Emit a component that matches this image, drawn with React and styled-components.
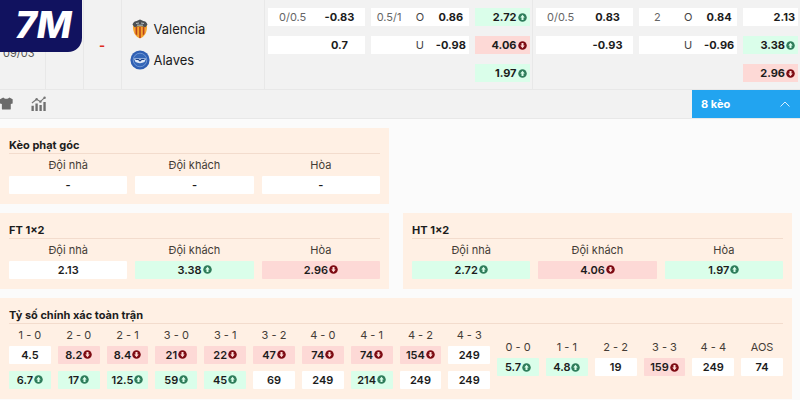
import React from "react";
import styled, { createGlobalStyle } from "styled-components";

const fullTime = {
  handicap: [
    { line: "0/0.5", price: "-0.83" },
    { line: "", price: "0.7" },
  ],
  total: [
    { line: "0.5/1", side: "O", price: "0.86" },
    { line: "", side: "U", price: "-0.98" },
  ],
  result: [
    { price: "2.72", trend: "up" },
    { price: "4.06", trend: "down" },
    { price: "1.97", trend: "up" },
  ],
};

const halfTime = {
  handicap: [
    { line: "0/0.5", price: "0.83" },
    { line: "", price: "-0.93" },
  ],
  total: [
    { line: "2", side: "O", price: "0.84" },
    { line: "", side: "U", price: "-0.96" },
  ],
  result: [
    { price: "2.13" },
    { price: "3.38", trend: "up" },
    { price: "2.96", trend: "down" },
  ],
};

const cornerOdds = [
  { label: "Đội nhà", prices: [{ price: "-" }] },
  { label: "Đội khách", prices: [{ price: "-" }] },
  { label: "Hòa", prices: [{ price: "-" }] },
];

const ftOdds = [
  { label: "Đội nhà", prices: [{ price: "2.13" }] },
  { label: "Đội khách", prices: [{ price: "3.38", trend: "up" }] },
  { label: "Hòa", prices: [{ price: "2.96", trend: "down" }] },
];

const htOdds = [
  { label: "Đội nhà", prices: [{ price: "2.72", trend: "up" }] },
  { label: "Đội khách", prices: [{ price: "4.06", trend: "down" }] },
  { label: "Hòa", prices: [{ price: "1.97", trend: "up" }] },
];

const scoreOdds = [
  { label: "1 - 0", prices: [{ price: "4.5" }, { price: "6.7", trend: "up" }] },
  { label: "2 - 0", prices: [{ price: "8.2", trend: "down" }, { price: "17", trend: "up" }] },
  { label: "2 - 1", prices: [{ price: "8.4", trend: "down" }, { price: "12.5", trend: "up" }] },
  { label: "3 - 0", prices: [{ price: "21", trend: "down" }, { price: "59", trend: "up" }] },
  { label: "3 - 1", prices: [{ price: "22", trend: "down" }, { price: "45", trend: "up" }] },
  { label: "3 - 2", prices: [{ price: "47", trend: "down" }, { price: "69" }] },
  { label: "4 - 0", prices: [{ price: "74", trend: "down" }, { price: "249" }] },
  { label: "4 - 1", prices: [{ price: "74", trend: "down" }, { price: "214", trend: "up" }] },
  { label: "4 - 2", prices: [{ price: "154", trend: "down" }, { price: "249" }] },
  { label: "4 - 3", prices: [{ price: "249" }, { price: "249" }] },
];

const drawOdds = [
  { label: "0 - 0", prices: [{ price: "5.7", trend: "up" }] },
  { label: "1 - 1", prices: [{ price: "4.8", trend: "up" }] },
  { label: "2 - 2", prices: [{ price: "19" }] },
  { label: "3 - 3", prices: [{ price: "159", trend: "down" }] },
  { label: "4 - 4", prices: [{ price: "249" }] },
  { label: "AOS", prices: [{ price: "74" }] },
];

// Icons

const TrendIcon = ({ trend }) => (
  <TrendSvg viewBox="0 0 18 18" $trend={trend} aria-hidden="true">
    <circle cx="9" cy="9" r="8.5" />
    <path
      d={trend === "up" ? "M9 3.5 13.5 9H11V14H7V9H4.5Z" : "M9 14.5 4.5 9H7V4H11V9H13.5Z"}
      fill={trend === "up" ? "#dafeea" : "#fdd9d6"}
    />
  </TrendSvg>
);

const ValenciaCrest = () => (
  <Crest viewBox="0 0 20 20" aria-hidden="true">
    <path d="M3.4 5.4C6 4.2 14 4.2 16.6 5.4L17 8C17 14 14 18 10 19.5C6 18 3 14 3 8Z" fill="#f5a52e" />
    <path d="M5.6 8h1.6v8.600L5.600 15zM9.200 8h1.600v11H9.200zM12.800 8h1.600v7l-1.600 1.600z" fill="#b8431d" />
    <path d="M2.5 5.5C4 1.5 7 2.6 10 0.6C13 2.6 16 1.5 17.5 5.5L15.5 8.2C12 7 8 7 4.5 8.2Z" fill="#4b5054" />
    <path d="M6 4.5 9 4M11 4 14 4.5M7 6.2h6" stroke="#b9c0c2" strokeWidth="1" />
  </Crest>
);

const AlavesCrest = () => (
  <Crest viewBox="0 0 20 20" aria-hidden="true">
    <circle cx="10" cy="10" r="9.6" fill="#2f5fb3" />
    <circle cx="10" cy="10" r="6.8" fill="#3567b8" stroke="#7fa3dc" strokeWidth="0.8" />
    <path d="M4 8.5h12l-1.500 3.500c-2.500 1.500-6.500 1.500-9 0z" fill="#dfe9f8" />
    <path d="M5.500 9.500h3l1.500 1.500 1.500-1.500h3" fill="none" stroke="#1b3f86" strokeWidth="1.200" />
  </Crest>
);

const ShirtIcon = () => (
  <ToolSvg viewBox="0 0 16 16" aria-hidden="true">
    <path
      d="M3.500 1.500C5 3.500 8.500 3.500 10 1.500L13.500 3.500V8L11.500 8.500V13.500Q11.500 14.500 10.500 14.500H3Q2 14.500 2 13.500V8.500L0 8V3.500Z"
      fill="#6b6b6b"
    />
  </ToolSvg>
);

const StatsIcon = () => (
  <ToolSvg viewBox="0 0 16 16" aria-hidden="true">
    <path d="M0.500 10.500h2.500V16H0.500zM4.700 8h2.500v8H4.700zM9 9.500h2.500V16H9zM13.200 6.500h2.500V16H13.200z" fill="#6f6f6f" />
    <path d="M1 7.500 6 3.500 10 6 14.500 1.800" fill="none" stroke="#777" strokeWidth="1.200" />
    <circle cx="6" cy="3.500" r="1.300" fill="#777" />
    <circle cx="10" cy="6" r="1.300" fill="#777" />
    <circle cx="14.500" cy="1.800" r="1.300" fill="#777" />
  </ToolSvg>
);

// Odds

const Price = ({ price, trend }) => (
  <PriceBox type="button" $trend={trend}>
    {price}
    {trend && <TrendIcon trend={trend} />}
  </PriceBox>
);

const OddsColumns = ({ items }) =>
  items.map((item) => (
    <OddsColumn key={item.label}>
      <OddsLabel>{item.label}</OddsLabel>
      <PriceStack>
        {item.prices.map((p, i) => (
          <Price key={i} {...p} />
        ))}
      </PriceStack>
    </OddsColumn>
  ));

const MainOdds = ({ odds }) => (
  <MainGrid>
    <MainColumn>
      {odds.handicap.map((o) => (
        <HandicapBox key={o.price} type="button">
          <Line>{o.line}</Line>
          <strong>{o.price}</strong>
        </HandicapBox>
      ))}
    </MainColumn>
    <MainColumn>
      {odds.total.map((o) => (
        <TotalBox key={o.price} type="button">
          <Line>{o.line}</Line>
          <Side>{o.side}</Side>
          <strong>{o.price}</strong>
        </TotalBox>
      ))}
    </MainColumn>
    <MainColumn>
      {odds.result.map((o) => (
        <ResultBox key={o.price} type="button" $trend={o.trend}>
          {o.price}
          {o.trend && <TrendIcon trend={o.trend} />}
        </ResultBox>
      ))}
    </MainColumn>
  </MainGrid>
);

const Panel = ({ title, items }) => (
  <PanelBox>
    <PanelTitle>{title}</PanelTitle>
    <ThreeGrid>
      <OddsColumns items={items} />
    </ThreeGrid>
  </PanelBox>
);

const App = () => {
  return (
    <Page>
      <GlobalStyle />
      <Logo>7M</Logo>
      <MatchTable>
        <colgroup>
          <col width="45" />
          <col width="38" />
          <col width="38" />
          <col width="143" />
          <col />
          <col />
        </colgroup>
        <tbody>
          <tr>
            <DateCell>09/03</DateCell>
            <Cell />
            <ScoreCell>-</ScoreCell>
            <Cell>
              <Teams>
                <Team>
                  <ValenciaCrest />
                  Valencia
                </Team>
                <Team>
                  <AlavesCrest />
                  Alaves
                </Team>
              </Teams>
            </Cell>
            <Cell>
              <MainOdds odds={fullTime} />
            </Cell>
            <Cell>
              <MainOdds odds={halfTime} />
            </Cell>
          </tr>
        </tbody>
      </MatchTable>

      <Toolbar>
        <ToolButton type="button" aria-label="Đội hình">
          <ShirtIcon />
        </ToolButton>
        <ToolButton type="button" aria-label="Thống kê">
          <StatsIcon />
        </ToolButton>
        <MoreButton type="button">
          8 kèo
          <svg width="10" height="6" viewBox="0 0 10 6" aria-hidden="true">
            <path d="M0.5 5.5 5 1 9.5 5.5" fill="none" stroke="#d9efff" />
          </svg>
        </MoreButton>
      </Toolbar>

      <Markets>
        <Panel title="Kèo phạt góc" items={cornerOdds} />
        <MarketBreak />
        <Panel title="FT 1×2" items={ftOdds} />
        <Panel title="HT 1×2" items={htOdds} />
        <WidePanel>
          <PanelTitle>Tỷ số chính xác toàn trận</PanelTitle>
          <ScoreGrid>
            <ScoreGroup $span={10}>
              <OddsColumns items={scoreOdds} />
            </ScoreGroup>
            <ScoreGroup $span={6}>
              <OddsColumns items={drawOdds} />
            </ScoreGroup>
          </ScoreGrid>
        </WidePanel>
      </Markets>
    </Page>
  );
};

export default App;

// --- Styled Components ---

const trendBg = { up: "#dafeea", down: "#fdd9d6" };

const GlobalStyle = createGlobalStyle`
  * {
    box-sizing: border-box;
  }

  body {
    margin: 0;
    background: #fbfbfb;
    color: #1c1c1c;
    font-family: Inter, "Liberation Sans", sans-serif;
    font-size: 11px;
  }

  button {
    font: inherit;
    color: inherit;
    border: 0;
    padding: 0;
    cursor: pointer;
  }
`;

const Page = styled.main`
  position: relative;
`;

const Logo = styled.div`
  position: absolute;
  top: 0;
  left: 0;
  width: 82px;
  height: 52px;
  padding-left: 15px;
  background: #11125f;
  border-radius: 0 0 14px 0;
  color: #fff;
  font-size: 37px;
  font-style: italic;
  font-weight: 800;
  line-height: 50px;
`;

const MatchTable = styled.table`
  width: 100%;
  table-layout: fixed;
  border-collapse: collapse;
  background: #f2f2f2;
`;

const Cell = styled.td`
  height: 89px;
  padding: 0;
  border-right: 1px solid #e8e8e8;
  border-bottom: 1px solid #e8e8e8;
  vertical-align: top;

  &:last-child {
    border-right: 0;
  }
`;

const DateCell = styled(Cell)`
  padding-top: 45px;
  padding-left: 3px;
  color: #555;
  line-height: 16px;
`;

const ScoreCell = styled(Cell)`
  padding-top: 36px;
  color: #e02b20;
  font-size: 13px;
  font-weight: 700;
  line-height: 18px;
  text-align: center;
`;

const Teams = styled.div`
  display: grid;
  gap: 11px;
  padding: 19px 0 0 8px;
`;

const Team = styled.div`
  display: flex;
  align-items: center;
  gap: 4px;
  font-size: 13px;
  line-height: 20px;
`;

const Crest = styled.svg`
  width: 20px;
  height: 20px;
`;

const MainGrid = styled.div`
  display: grid;
  grid-template-columns: 98fr 98fr 55fr;
  gap: 6px;
  padding: 8px 2px 0 3px;
`;

const MainColumn = styled.div`
  display: grid;
  align-content: start;
  gap: 10px;
`;

const HandicapBox = styled.button`
  display: grid;
  grid-template-columns: 42fr 51fr;
  align-items: center;
  height: 18px;
  padding-left: 4px;
  background: #fff;
  text-align: center;
`;

const TotalBox = styled(HandicapBox)`
  grid-template-columns: 36fr 26fr 36fr;
  padding-left: 0;
`;

const ResultBox = styled.button`
  display: flex;
  align-items: center;
  justify-content: flex-end;
  gap: 1px;
  height: 18px;
  padding-right: 3px;
  background: ${({ $trend }) => trendBg[$trend] || "#fff"};
  font-weight: 700;
`;

const Line = styled.span`
  color: #666;
`;

const Side = styled.span`
  color: #444;
`;

const TrendSvg = styled.svg`
  flex: none;
  width: 9px;
  height: 9px;
  fill: ${({ $trend }) => ($trend === "up" ? "#2f7d5b" : "#7d0a12")};
`;

const Toolbar = styled.div`
  display: flex;
  align-items: center;
  gap: 16px;
  height: 29px;
  background: #f2f2f2;
  border-bottom: 1px solid #e8e8e8;
`;

const ToolButton = styled.button`
  display: flex;
  background: none;
`;

const ToolSvg = styled.svg`
  width: 15px;
  height: 15px;
`;

const MoreButton = styled.button`
  display: flex;
  align-items: center;
  justify-content: space-between;
  align-self: stretch;
  width: 108px;
  margin-left: auto;
  padding: 0 10px 0 9px;
  background: #22a4f0;
  color: #fff;
  font-weight: 700;
`;

const Markets = styled.div`
  display: grid;
  grid-template-columns: 1fr 1fr;
  gap: 9px 14px;
  padding: 9px 8px 2px 0;
`;

const MarketBreak = styled.div``;

const PanelBox = styled.section`
  padding: 9px 9px 10px;
  background: #fff0e4;
`;

const WidePanel = styled(PanelBox)`
  grid-column: 1 / -1;
`;

const PanelTitle = styled.h2`
  margin: 0;
  border-bottom: 1px solid #f3dccd;
  font-size: 11px;
  font-weight: 700;
  line-height: 16px;
`;

const ThreeGrid = styled.div`
  display: grid;
  grid-template-columns: repeat(3, 1fr);
  gap: 8px;
`;

const ScoreGrid = styled.div`
  display: grid;
  grid-template-columns: repeat(16, 1fr);
  column-gap: 7px;
  align-items: center;
`;

const ScoreGroup = styled.div`
  grid-column: span ${({ $span }) => $span};
  display: grid;
  grid-template-columns: subgrid;
`;

const OddsColumn = styled.div`
  min-width: 0;
`;

const OddsLabel = styled.div`
  color: #443c36;
  line-height: 22px;
  text-align: center;
`;

const PriceStack = styled.div`
  display: grid;
  gap: 7px;
`;

const PriceBox = styled.button`
  display: flex;
  align-items: center;
  justify-content: center;
  gap: 1px;
  height: 18px;
  background: ${({ $trend }) => trendBg[$trend] || "#fff"};
  border-radius: 1px;
  font-weight: 600;
`;
